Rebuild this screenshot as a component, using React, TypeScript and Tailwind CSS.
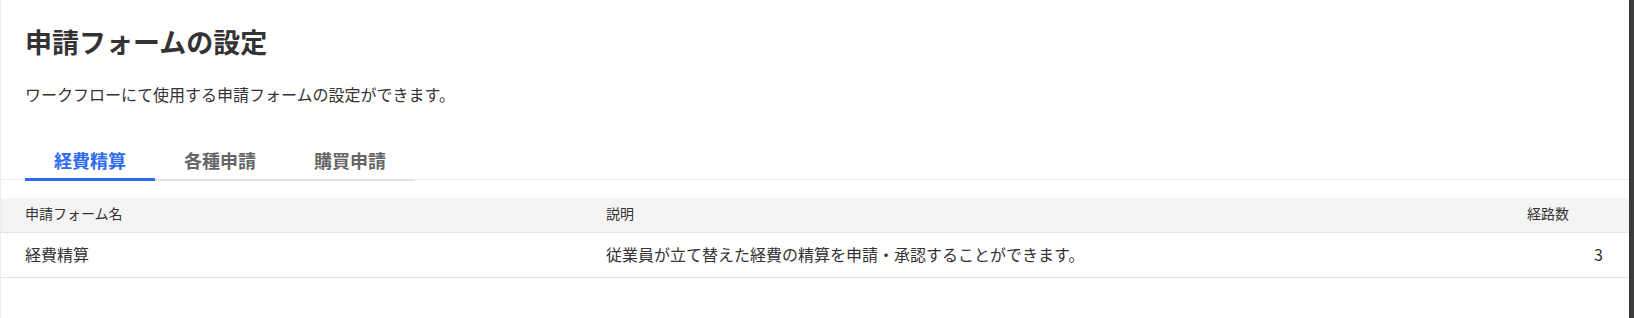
import React, { useState } from 'react';

type FormRow = {
  id: string;
  name: string;
  description: string;
  routes: number;
};

const tabs = ['経費精算', '各種申請', '購買申請'];

const rowsByTab: Record<string, FormRow[]> = {
  経費精算: [
    {
      id: 'expense',
      name: '経費精算',
      description: '従業員が立て替えた経費の精算を申請・承認することができます。',
      routes: 3,
    },
  ],
  各種申請: [],
  購買申請: [],
};

const App: React.FC = () => {
  const [activeTab, setActiveTab] = useState('経費精算');
  const rows = rowsByTab[activeTab] ?? [];

  return (
    <div className="flex w-[1634px] h-[318px] bg-white text-[#333333] font-['Noto_Sans_CJK_JP',sans-serif]">
      <div className="flex-1 min-w-0 border-l border-[#efefef]">
        <div className="border-b border-[#ececec]">
          <div className="px-6 pt-6">
            <h1 className="text-[27px] leading-[36px] font-bold">申請フォームの設定</h1>
            <p className="mt-[22px] text-[16px] leading-6">ワークフローにて使用する申請フォームの設定ができます。</p>
            <div className="mt-[42px] -mb-[2px] flex">
              {tabs.map(tab => {
                const active = tab === activeTab;
                return (
                  <button
                    key={tab}
                    onClick={() => setActiveTab(tab)}
                    className={
                      active
                        ? 'w-[130px] pb-[6px] text-[18px] leading-6 font-bold text-[#2f6bf0] border-b-[3px] border-[#2f6bf0]'
                        : 'w-[130px] pb-[7px] text-[18px] leading-6 font-bold text-[#666666] border-b-2 border-[#e3e3e3]'
                    }
                  >
                    {tab}
                  </button>
                );
              })}
            </div>
          </div>
        </div>

        <div className="mt-[18px]">
          <div className="grid grid-cols-[581px_1fr_126px] h-[35px] bg-[#f5f4f4] border-b border-[#e4e4e4] text-[14px] leading-5">
            <div className="pl-6 pt-[5px]">申請フォーム名</div>
            <div className="pl-6 pt-[5px]">説明</div>
            <div className="pl-6 pt-[5px]">経路数</div>
          </div>
          {rows.map(row => (
            <div key={row.id} className="grid grid-cols-[581px_1fr_126px] border-b border-[#e4e4e4] text-[16px] leading-6">
              <div className="pl-6 pt-[9px] pb-[11px]">{row.name}</div>
              <div className="pl-6 pt-[9px] pb-[11px]">{row.description}</div>
              <div className="pr-[26px] pt-[9px] pb-[11px] text-right">{row.routes}</div>
            </div>
          ))}
        </div>
      </div>
      <div className="w-[5px] shrink-0 bg-[#3b3b3b]" />
    </div>
  );
};

export default App;
